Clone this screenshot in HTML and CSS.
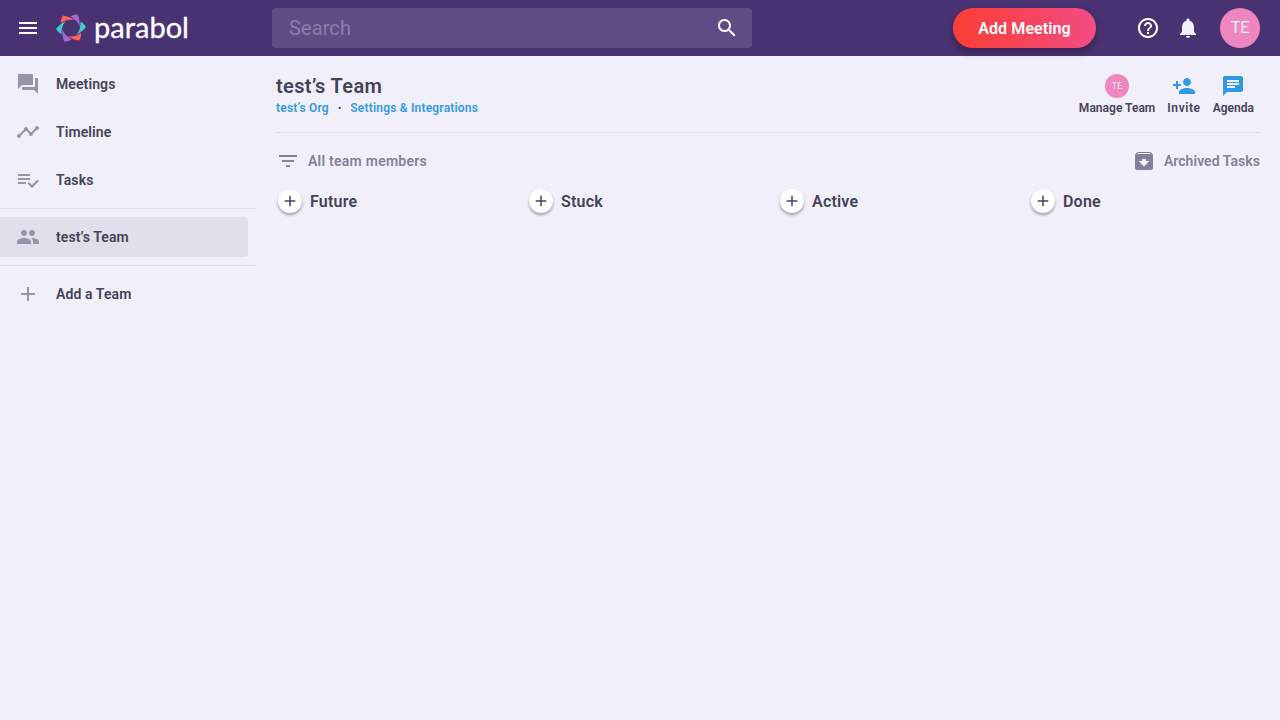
FILE: index.html
```html
<!doctype html>
<html>
<head>
<meta charset="utf-8">
<title>Team Dashboard | Parabol</title>
<link rel="stylesheet" href="styles.css">
</head>

<body>
<div class="topbar">
	<div class="brand">
		<svg class="icon menu" viewBox="0 0 24 24"><path d="M3 18h18v-2H3v2zm0-5h18v-2H3v2zm0-7v2h18V6H3z"/></svg>
		<svg class="logo" viewBox="-16 -16 32 32">
			<path fill="#FD6157" d="M-10-5Q-10.500-10-8-12.500Q-3-12 3.500-8Q-4-9.500-10-5z" transform="rotate(0)"/>
			<path fill="#A06BD6" d="M-10-5Q-10.500-10-8-12.500Q-3-12 3.500-8Q-4-9.500-10-5z" transform="rotate(60)"/>
			<path fill="#44C6CF" d="M-10-5Q-10.500-10-8-12.500Q-3-12 3.500-8Q-4-9.500-10-5z" transform="rotate(120)"/>
			<path fill="#FD6157" d="M-10-5Q-10.500-10-8-12.500Q-3-12 3.500-8Q-4-9.500-10-5z" transform="rotate(180)"/>
			<path fill="#A06BD6" d="M-10-5Q-10.500-10-8-12.500Q-3-12 3.500-8Q-4-9.500-10-5z" transform="rotate(240)"/>
			<path fill="#44C6CF" d="M-10-5Q-10.500-10-8-12.500Q-3-12 3.500-8Q-4-9.500-10-5z" transform="rotate(300)"/>
		</svg>
		<span class="wordmark">parabol</span>
	</div>
	<div class="search">
		<span class="search-text">Search</span>
		<svg class="icon" viewBox="0 0 24 24"><path d="M15.500 14h-.79l-.28-.27C15.410 12.590 16 11.110 16 9.500 16 5.910 13.090 3 9.500 3S3 5.910 3 9.500 5.910 16 9.500 16c1.610 0 3.090-.59 4.230-1.570l.27.28v.79l5 4.990L20.490 19l-4.990-5zm-6 0C7.010 14 5 11.990 5 9.500S7.010 5 9.500 5 14 7.010 14 9.500 11.990 14 9.500 14z"/></svg>
	</div>
	<div class="top-actions">
		<button class="add-meeting">Add Meeting</button>
		<svg class="icon help" viewBox="0 0 24 24"><path d="M11 18h2v-2h-2v2zm1-16C6.480 2 2 6.480 2 12s4.480 10 10 10 10-4.480 10-10S17.520 2 12 2zm0 18c-4.410 0-8-3.590-8-8s3.590-8 8-8 8 3.590 8 8-3.590 8-8 8zm0-14c-2.210 0-4 1.790-4 4h2c0-1.100.9-2 2-2s2 .9 2 2c0 2-3 1.750-3 5h2c0-2.250 3-2.500 3-5 0-2.210-1.790-4-4-4z"/></svg>
		<svg class="icon bell" viewBox="0 0 24 24"><path d="M12 22c1.100 0 2-.9 2-2h-4c0 1.100.89 2 2 2zm6-6v-5c0-3.070-1.640-5.640-4.500-6.320V4c0-.83-.67-1.500-1.500-1.500s-1.500.67-1.500 1.500v.68C7.630 5.360 6 7.920 6 11v5l-2 2v1h16v-1l-2-2z"/></svg>
		<div class="avatar">TE</div>
	</div>
</div>

<div class="page">
	<div class="sidebar">
		<div class="nav-group">
			<a class="nav-item">
				<svg class="icon" viewBox="0 0 24 24"><path d="M21 6h-2v9H6v2c0 .55.45 1 1 1h11l4 4V7c0-.55-.45-1-1-1zm-4 6V3c0-.55-.45-1-1-1H3c-.55 0-1 .45-1 1v14l4-4h10c.55 0 1-.45 1-1z"/></svg>
				Meetings
			</a>
			<a class="nav-item">
				<svg class="icon" viewBox="0 0 24 24"><path d="M23 8c0 1.100-.9 2-2 2-.18 0-.35-.02-.51-.07l-3.560 3.550c.05.16.07.34.07.52 0 1.100-.9 2-2 2s-2-.9-2-2c0-.18.02-.36.07-.52l-2.550-2.550c-.16.05-.34.07-.52.07s-.36-.02-.52-.07l-4.550 4.560c.05.16.07.33.07.51 0 1.100-.9 2-2 2s-2-.9-2-2 .9-2 2-2c.18 0 .35.02.51.07l4.560-4.550C8.020 9.360 8 9.180 8 9c0-1.100.9-2 2-2s2 .9 2 2c0 .18-.02.36-.07.52l2.550 2.550c.16-.05.34-.07.52-.07s.36.02.52.07l3.550-3.560C19.020 8.350 19 8.180 19 8c0-1.100.9-2 2-2s2 .9 2 2z"/></svg>
				Timeline
			</a>
			<a class="nav-item">
				<svg class="icon" viewBox="0 0 24 24"><path d="M14 10H2v2h12v-2zm0-4H2v2h12V6zM2 16h8v-2H2v2zm19.500-4.500L23 13l-6.990 7-4.510-4.500L13 14l3.010 3 5.490-5.500z"/></svg>
				Tasks
			</a>
		</div>
		<div class="team-group">
			<a class="nav-item team-item">
				<svg class="icon" viewBox="0 0 24 24"><path d="M16 11c1.660 0 2.990-1.340 2.990-3S17.660 5 16 5c-1.660 0-3 1.340-3 3s1.340 3 3 3zm-8 0c1.660 0 2.990-1.340 2.990-3S9.660 5 8 5C6.340 5 5 6.340 5 8s1.340 3 3 3zm0 2c-2.330 0-7 1.170-7 3.500V19h14v-2.500c0-2.330-4.670-3.500-7-3.500zm8 0c-.29 0-.62.02-.97.05 1.160.84 1.970 1.970 1.970 3.450V19h6v-2.500c0-2.330-4.670-3.500-7-3.500z"/></svg>
				test’s Team
			</a>
		</div>
		<a class="nav-item add-team">
			<svg class="icon" viewBox="0 0 24 24"><path d="M19 13h-6v6h-2v-6H5v-2h6V5h2v6h6v2z"/></svg>
			Add a Team
		</a>
	</div>

	<div class="main">
		<div class="team-header">
			<div>
				<h1 class="team-name">test’s Team</h1>
				<div class="team-links"><a>test’s Org</a><span class="dot">•</span><a>Settings &amp; Integrations</a></div>
			</div>
			<div class="team-actions">
				<div class="team-action">
					<div class="avatar-small">TE</div>
					Manage Team
				</div>
				<div class="team-action invite">
					<svg class="icon" viewBox="0 0 24 24"><path d="M15 12c2.210 0 4-1.790 4-4s-1.790-4-4-4-4 1.790-4 4 1.790 4 4 4zm-9-2V7H4v3H1v2h3v3h2v-3h3v-2H6zm9 4c-2.670 0-8 1.340-8 4v2h16v-2c0-2.660-5.330-4-8-4z"/></svg>
					Invite
				</div>
				<div class="team-action">
					<svg class="icon" viewBox="0 0 24 24"><path d="M20 2H4c-1.100 0-1.990.9-1.990 2L2 22l4-4h14c1.100 0 2-.9 2-2V4c0-1.100-.9-2-2-2zM6 9h12v2H6V9zm8 5H6v-2h8v2zm4-6H6V6h12v2z"/></svg>
					Agenda
				</div>
			</div>
		</div>

		<div class="filter-row">
			<div class="filter">
				<svg class="icon" viewBox="0 0 24 24"><path d="M10 18h4v-2h-4v2zM3 6v2h18V6H3zm3 7h12v-2H6v2z"/></svg>
				All team members
			</div>
			<div class="archived">
				<svg class="icon" viewBox="0 0 24 24"><path d="M20.540 5.230l-1.390-1.680C18.880 3.210 18.470 3 18 3H6c-.47 0-.88.21-1.160.55L3.460 5.230C3.170 5.570 3 6.020 3 6.500V19c0 1.100.9 2 2 2h14c1.100 0 2-.9 2-2V6.500c0-.48-.17-.93-.46-1.270zM12 17.500L6.500 12H10v-2h4v2h3.500L12 17.500zM5.120 5l.81-1h12l.94 1H5.120z"/></svg>
				Archived Tasks
			</div>
		</div>

		<div class="columns">
			<div class="column"><button class="add-task"><svg class="icon" viewBox="0 0 24 24"><path d="M19 13h-6v6h-2v-6H5v-2h6V5h2v6h6v2z"/></svg></button>Future</div>
			<div class="column"><button class="add-task"><svg class="icon" viewBox="0 0 24 24"><path d="M19 13h-6v6h-2v-6H5v-2h6V5h2v6h6v2z"/></svg></button>Stuck</div>
			<div class="column"><button class="add-task"><svg class="icon" viewBox="0 0 24 24"><path d="M19 13h-6v6h-2v-6H5v-2h6V5h2v6h6v2z"/></svg></button>Active</div>
			<div class="column"><button class="add-task"><svg class="icon" viewBox="0 0 24 24"><path d="M19 13h-6v6h-2v-6H5v-2h6V5h2v6h6v2z"/></svg></button>Done</div>
		</div>
	</div>
</div>
</body>
</html>
```

FILE: styles.css
```css
* {margin:0; padding:0; box-sizing:border-box;}

html, body {height:100%; overflow:hidden;}
body {background:#F1F0FA; color:#444258; font-family:Roboto, "Noto Sans", sans-serif; font-size:14px;}

.icon {display:block; width:24px; height:24px; fill:currentColor; flex:none;}

/* top bar */
.topbar {display:flex; align-items:center; height:56px; background:#493272; color:#fff;}
.brand {display:flex; align-items:center; width:272px; padding-left:16px;}
.logo {display:block; width:32px; height:32px; margin-left:15px;}
.wordmark {margin:-3px 0 0 7px; font-family:"Lato", sans-serif; font-size:29px; line-height:32px; color:#fff; -webkit-text-stroke:.3px #fff;}
.search {display:flex; align-items:center; justify-content:space-between; width:480px; height:40px; padding:0 13px 0 17px; background:#614B85; border-radius:4px;}
.search-text {font-size:20px; letter-spacing:.1px; color:#8C7DA8;}
.top-actions {display:flex; align-items:center; flex:1; padding-right:20px;}
.add-meeting {width:143px; height:40px; margin-left:201px; border:0; border-radius:20px; background:linear-gradient(90deg, #FA3D34, #F24C85); color:#fff; font:600 16px Roboto, sans-serif; letter-spacing:.1px; box-shadow:0 4px 8px rgba(0,0,0,.3);}
.help {margin-left:40px;}
.bell {margin-left:16px; color:#F1F0FA;}
.avatar {width:40px; height:40px; margin-left:20px; border-radius:50%; background:#EE86BF; color:#F1F0FA; font-size:16px; line-height:40px; text-align:center;}

/* sidebar */
.page {display:flex; height:664px;}
.sidebar {width:256px; flex:none; padding-top:4px;}
.nav-item {display:flex; align-items:center; gap:16px; height:48px; padding-left:16px; font-weight:600; font-size:14px; letter-spacing:.1px; color:#444258;}
.nav-item .icon {color:#9694A8;}
.nav-group {padding-bottom:4px; border-bottom:1px solid #DFDEEA;}
.team-group {padding:8px 0; border-bottom:1px solid #DFDEEA;}
.team-item {width:248px; height:40px; background:#E0DFEB; border-radius:0 4px 4px 0;}
.add-team {margin-top:4px;}

/* main */
.main {flex:1; padding:16px 20px 0;}
.team-header {display:flex; justify-content:space-between; height:61px; border-bottom:1px solid #DFDEEA;}
.team-name {font-size:20px; font-weight:600; line-height:28px; letter-spacing:.35px; color:#444258;}
.team-links {display:flex; font-size:12px; font-weight:600; line-height:16px; letter-spacing:.2px; color:#329AE5;}
.dot {margin:0 9px; color:#444258; font-size:9px;}
.team-actions {display:flex; gap:12px; padding-right:6px; margin-top:2px;}
.team-action {display:flex; flex-direction:column; align-items:center; font-size:12px; font-weight:600; line-height:16px; letter-spacing:.02px; color:#444258;}
.team-action .icon {color:#329AE5; margin-bottom:2px;}
.invite {letter-spacing:.6px;}
.avatar-small {width:24px; height:24px; margin-bottom:2px; border-radius:50%; background:#EE86BF; color:#F1F0FA; font-size:9px; font-weight:400; line-height:24px; text-align:center;}

.filter-row {display:flex; justify-content:space-between; align-items:center; height:56px; font-weight:600; font-size:14px; color:#82809A;}
.filter, .archived {display:flex; align-items:center; gap:8px;}
.filter {letter-spacing:.25px;}
.archived {letter-spacing:.05px;}
.filter .icon, .archived .icon {color:#82809A;}

.columns {display:grid; grid-template-columns:repeat(3, 251px) 1fr; margin-top:-4px;}
.column {display:flex; align-items:center; gap:8px; height:32px; padding-left:2px; font-size:16px; font-weight:600; letter-spacing:.2px; color:#444258;}
.add-task {display:flex; align-items:center; justify-content:center; width:24px; height:24px; border:0; border-radius:50%; background:#fff; color:#444258; box-shadow:0 2px 3px rgba(0,0,0,.35);}
.add-task .icon {width:18px; height:18px;}
```
